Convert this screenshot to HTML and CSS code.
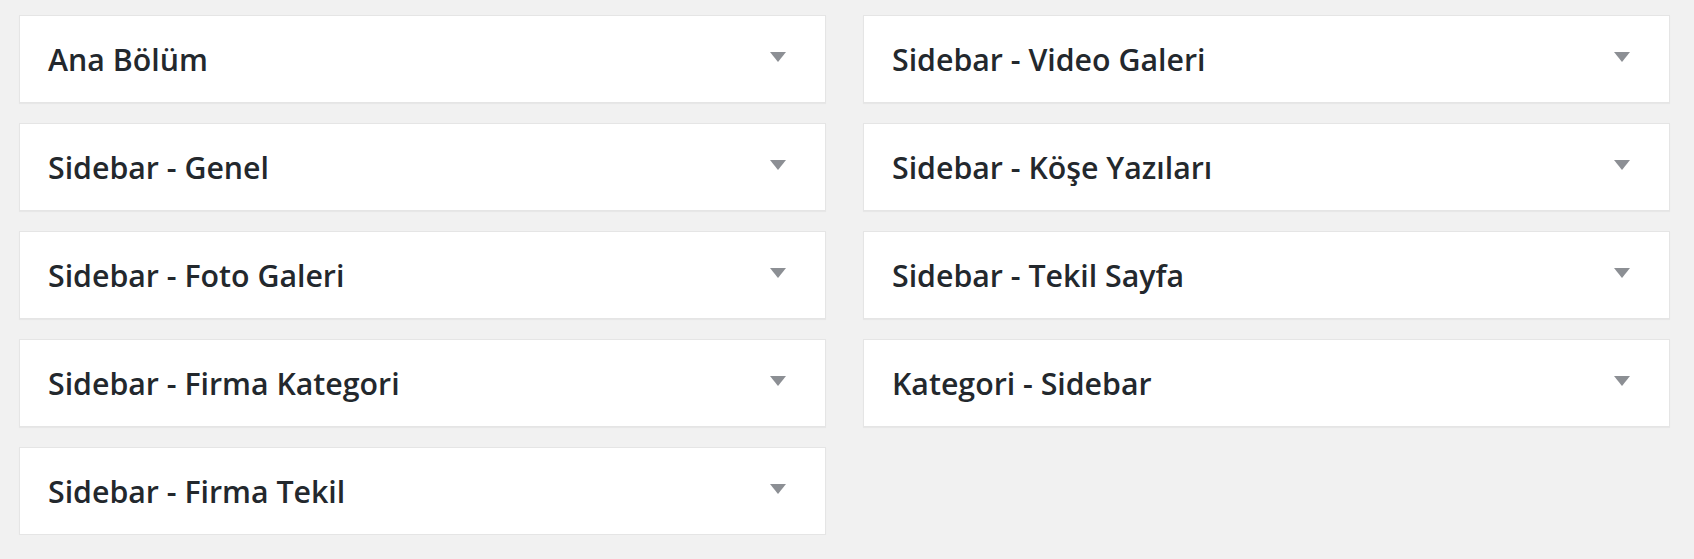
FILE: index.html
```html
<!DOCTYPE html>
<html lang="tr">
<head>
    <meta charset="UTF-8">
    <meta name="viewport" content="width=device-width, initial-scale=1.0">
    <title>Widgets</title>
    <link rel="stylesheet" href="styles.css">
</head>
<body>
    <div class="sidebars">
        <div class="column">
            <div class="widget-area">
                <h3>Ana Bölüm</h3>
                <span class="toggle"><svg width="16" height="10" viewBox="0 0 16 10"><polygon points="0,0 16,0 8,10"/></svg></span>
            </div>
            <div class="widget-area">
                <h3>Sidebar - Genel</h3>
                <span class="toggle"><svg width="16" height="10" viewBox="0 0 16 10"><polygon points="0,0 16,0 8,10"/></svg></span>
            </div>
            <div class="widget-area">
                <h3>Sidebar - Foto Galeri</h3>
                <span class="toggle"><svg width="16" height="10" viewBox="0 0 16 10"><polygon points="0,0 16,0 8,10"/></svg></span>
            </div>
            <div class="widget-area">
                <h3>Sidebar - Firma Kategori</h3>
                <span class="toggle"><svg width="16" height="10" viewBox="0 0 16 10"><polygon points="0,0 16,0 8,10"/></svg></span>
            </div>
            <div class="widget-area">
                <h3>Sidebar - Firma Tekil</h3>
                <span class="toggle"><svg width="16" height="10" viewBox="0 0 16 10"><polygon points="0,0 16,0 8,10"/></svg></span>
            </div>
        </div>
        <div class="column">
            <div class="widget-area">
                <h3>Sidebar - Video Galeri</h3>
                <span class="toggle"><svg width="16" height="10" viewBox="0 0 16 10"><polygon points="0,0 16,0 8,10"/></svg></span>
            </div>
            <div class="widget-area">
                <h3>Sidebar - Köşe Yazıları</h3>
                <span class="toggle"><svg width="16" height="10" viewBox="0 0 16 10"><polygon points="0,0 16,0 8,10"/></svg></span>
            </div>
            <div class="widget-area">
                <h3>Sidebar - Tekil Sayfa</h3>
                <span class="toggle"><svg width="16" height="10" viewBox="0 0 16 10"><polygon points="0,0 16,0 8,10"/></svg></span>
            </div>
            <div class="widget-area">
                <h3>Kategori - Sidebar</h3>
                <span class="toggle"><svg width="16" height="10" viewBox="0 0 16 10"><polygon points="0,0 16,0 8,10"/></svg></span>
            </div>
        </div>
    </div>
</body>
</html>
```

FILE: styles.css
```css
body {
    margin: 0;
    background-color: #f1f1f1;
    font-family: "Open Sans", "Noto Sans", sans-serif;
    color: #23282d;
}
.sidebars {
    display: grid;
    grid-template-columns: 807px 807px;
    column-gap: 37px;
    padding: 15px 0 0 19px;
}
.column {
    display: flex;
    flex-direction: column;
    gap: 20px;
}
.widget-area {
    box-sizing: border-box;
    height: 88px;
    display: flex;
    align-items: center;
    justify-content: space-between;
    padding: 0 39px 0 28px;
    background: #fff;
    border: 1px solid #e5e5e5;
    box-shadow: 0 1px 1px rgba(0,0,0,0.04);
}
.widget-area h3 {
    margin: 0;
    font-size: 30.3px;
    font-weight: 600;
}
.toggle {
    display: flex;
    margin-top: -5px;
}
.toggle svg {
    fill: #8c8f94;
}
```
